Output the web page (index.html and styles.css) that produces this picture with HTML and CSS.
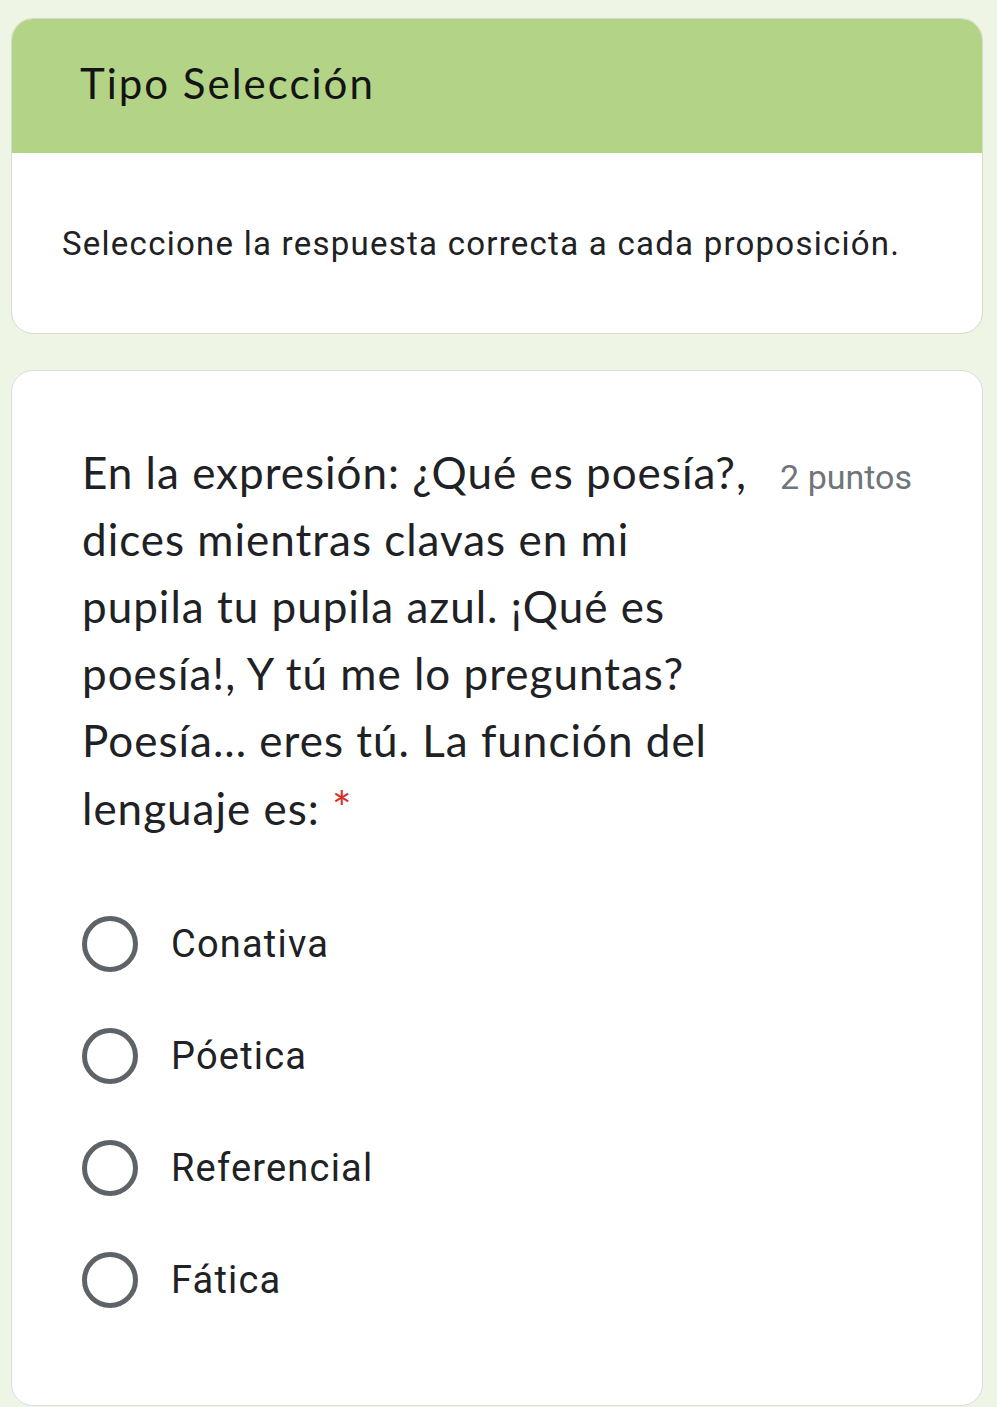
FILE: index.html
```html
<!DOCTYPE html>
<html lang="es">
<head>
<meta charset="UTF-8">
<meta name="viewport" content="width=device-width, initial-scale=1.0">
<title>Tipo Selección</title>
<link rel="stylesheet" href="styles.css">
</head>
<body>
<div class="page">
    <div class="card section-card">
        <div class="section-header">Tipo Selección</div>
        <div class="section-desc">Seleccione la respuesta correcta a cada proposición.</div>
    </div>

    <div class="card question-card">
        <div class="question-top">
            <div class="question-title">En la expresión: ¿Qué es poesía?, dices mientras clavas en mi pupila tu pupila azul. ¡Qué es poesía!, Y tú me lo preguntas? Poesía... eres tú. La función del lenguaje es: <span class="required">*</span></div>
            <div class="points">2 puntos</div>
        </div>
        <div class="options">
            <label class="option"><span class="radio"></span><span class="option-text">Conativa</span></label>
            <label class="option"><span class="radio"></span><span class="option-text">Póetica</span></label>
            <label class="option"><span class="radio"></span><span class="option-text">Referencial</span></label>
            <label class="option"><span class="radio"></span><span class="option-text">Fática</span></label>
        </div>
    </div>
</div>
</body>
</html>
```

FILE: styles.css
```css
body {
    margin: 0;
    padding: 0;
    background-color: #eef5e5;
    font-family: Roboto, "Liberation Sans", sans-serif;
    color: #202124;
}
.page {
    padding: 18px 14px 0 11px;
    display: flex;
    flex-direction: column;
    gap: 36px;
}
.card {
    background-color: #fff;
    border: 1px solid #dadce0;
    border-radius: 22px;
    overflow: hidden;
}
.section-card {
    border-color: #d4dccb;
}
.section-header {
    background-color: #b3d386;
    height: 134px;
    padding-left: 68px;
    font-family: Lato, "Open Sans", sans-serif;
    font-size: 42px;
    letter-spacing: 2px;
    line-height: 128px;
    color: #141414;
}
.section-desc {
    height: 180px;
    padding-left: 50px;
    display: flex;
    align-items: center;
    font-size: 33px;
    letter-spacing: 1.25px;
}
.question-card {
    padding: 68px 70px 97px 70px;
}
.question-top {
    display: flex;
    justify-content: space-between;
    align-items: baseline;
}
.question-title {
    width: 674px;
    font-family: Lato, "Open Sans", sans-serif;
    font-size: 44px;
    letter-spacing: 1px;
    line-height: 67px;
    color: #202124;
}
.required {
    color: #d93025;
    font-size: 46px;
}
.points {
    font-size: 34px;
    color: #70757a;
}
.options {
    margin-top: 74px;
    display: flex;
    flex-direction: column;
    gap: 56px;
}
.option {
    display: flex;
    align-items: center;
    gap: 33px;
}
.radio {
    width: 46px;
    height: 46px;
    border: 5px solid #5f6368;
    border-radius: 50%;
    flex-shrink: 0;
}
.option-text {
    font-size: 38px;
    letter-spacing: 1.2px;
    line-height: 56px;
}
```
